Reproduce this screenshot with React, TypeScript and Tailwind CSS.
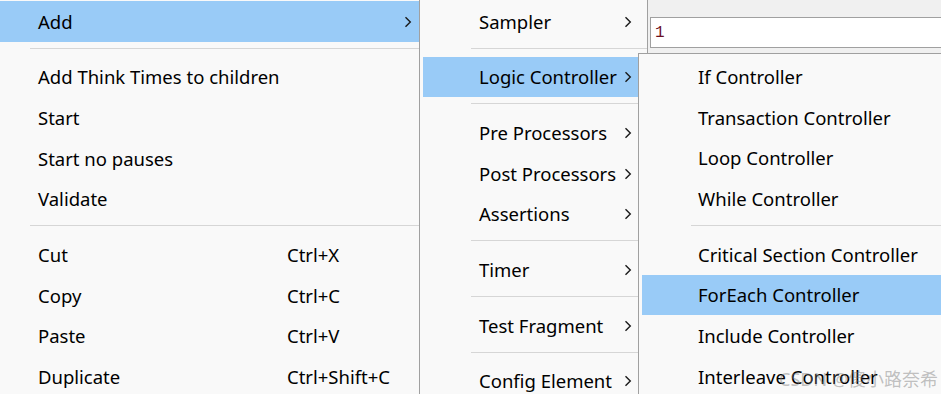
import React from "react";

const Arrow = () => (
  <svg width="8" height="12" viewBox="0 0 8 12" className="shrink-0">
    <path d="M1.5 1.2 L6.3 6 L1.5 10.8" fill="none" stroke="#1a1a1a" strokeWidth="1.4" />
  </svg>
);

type It = { t: string; k?: string; sub?: boolean; hi?: boolean } | "sep";

const m1: It[] = [
  { t: "Add", sub: true, hi: true },
  "sep",
  { t: "Add Think Times to children" },
  { t: "Start" },
  { t: "Start no pauses" },
  { t: "Validate" },
  "sep",
  { t: "Cut", k: "Ctrl+X" },
  { t: "Copy", k: "Ctrl+C" },
  { t: "Paste", k: "Ctrl+V" },
  { t: "Duplicate", k: "Ctrl+Shift+C" },
];

const m2: It[] = [
  { t: "Sampler", sub: true },
  "sep",
  { t: "Logic Controller", sub: true, hi: true },
  "sep",
  { t: "Pre Processors", sub: true },
  { t: "Post Processors", sub: true },
  { t: "Assertions", sub: true },
  "sep",
  { t: "Timer", sub: true },
  "sep",
  { t: "Test Fragment", sub: true },
  "sep",
  { t: "Config Element", sub: true },
];

const m3: It[] = [
  { t: "If Controller" },
  { t: "Transaction Controller" },
  { t: "Loop Controller" },
  { t: "While Controller" },
  "sep",
  { t: "Critical Section Controller" },
  { t: "ForEach Controller", hi: true },
  { t: "Include Controller" },
  { t: "Interleave Controller" },
];

const font = { fontFamily: '"Noto Sans", "Open Sans", sans-serif' };

export default function App() {
  return (
    <div
      className="relative w-[941px] h-[394px] overflow-hidden bg-[#f0f0f0] text-[18.5px] text-black leading-none"
      style={font}
    >
      <div className="flex h-full">
        {/* Menu 1 */}
        <div className="w-[419px] shrink-0 bg-[#f9f9f9] pt-px">
          {m1.map((it, i) =>
            it === "sep" ? (
              <div key={i} className="h-[15px] pt-[6px] pl-[30px]">
                <div className="h-px bg-[#d6d6d6]" />
              </div>
            ) : (
              <div
                key={i}
                className={`h-[40.67px] flex items-center pl-[38px] pr-[7px] pt-[1px] ${it.hi ? "bg-[#99cbf7]" : ""}`}
              >
                <span className="w-[249px] shrink-0">{it.t}</span>
                {it.k && <span>{it.k}</span>}
                {it.sub && <span className="ml-auto flex"><Arrow /></span>}
              </div>
            )
          )}
        </div>
        {/* Menu 2 */}
        <div className="w-[229px] shrink-0 bg-[#f9f9f9] border-x border-[#a0a0a0] pt-px">
          {m2.map((it, i) =>
            it === "sep" ? (
              <div key={i} className="h-[15px] pt-[6px] pl-[51px]">
                <div className="h-px bg-[#d6d6d6]" />
              </div>
            ) : (
              <div key={i} className="px-[3px]">
                <div
                  className={`h-[40.67px] flex items-center pl-[56px] pr-[12px] pt-[1px] ${it.hi ? "bg-[#99cbf7]" : ""}`}
                >
                  <span>{it.t}</span>
                  {it.sub && <span className="ml-auto flex"><Arrow /></span>}
                </div>
              </div>
            )
          )}
        </div>
        {/* Background app area */}
        <div className="flex-1 bg-[#f0f0f0] pt-[17px] pl-[2px]">
          <div className="h-[31px] border-y border-l border-[#a0a0a0] bg-white flex items-center pl-[4px]">
            <span
              className="text-[16px] text-[#6b0f1f]"
              style={{ fontFamily: '"Liberation Mono", monospace' }}
            >
              1
            </span>
          </div>
        </div>
      </div>

      {/* Menu 3 (submenu popup) */}
      <div className="absolute left-[638px] top-[53px] w-[320px] h-[360px] bg-[#f9f9f9] border-t border-l border-[#a0a0a0] pt-[2.5px]">
        {m3.map((it, i) =>
          it === "sep" ? (
            <div key={i} className="h-[15px] pt-[6px] pl-[52px]">
              <div className="h-px bg-[#d6d6d6]" />
            </div>
          ) : (
            <div key={i} className="pl-[3px]">
              <div
                className={`h-[40.67px] flex items-center pl-[56px] pt-[1px] ${it.hi ? "bg-[#99cbf7]" : ""}`}
              >
                <span>{it.t}</span>
              </div>
            </div>
          )
        )}
      </div>

      {/* Watermark */}
      <div
        className="absolute right-[3px] bottom-[6px] text-[18px] text-[rgba(120,120,120,0.45)] whitespace-nowrap pointer-events-none"
        style={{ fontFamily: '"Noto Sans", "Noto Sans CJK SC", sans-serif' }}
      >
        CSDN @傻小路奈希
      </div>
    </div>
  );
}
